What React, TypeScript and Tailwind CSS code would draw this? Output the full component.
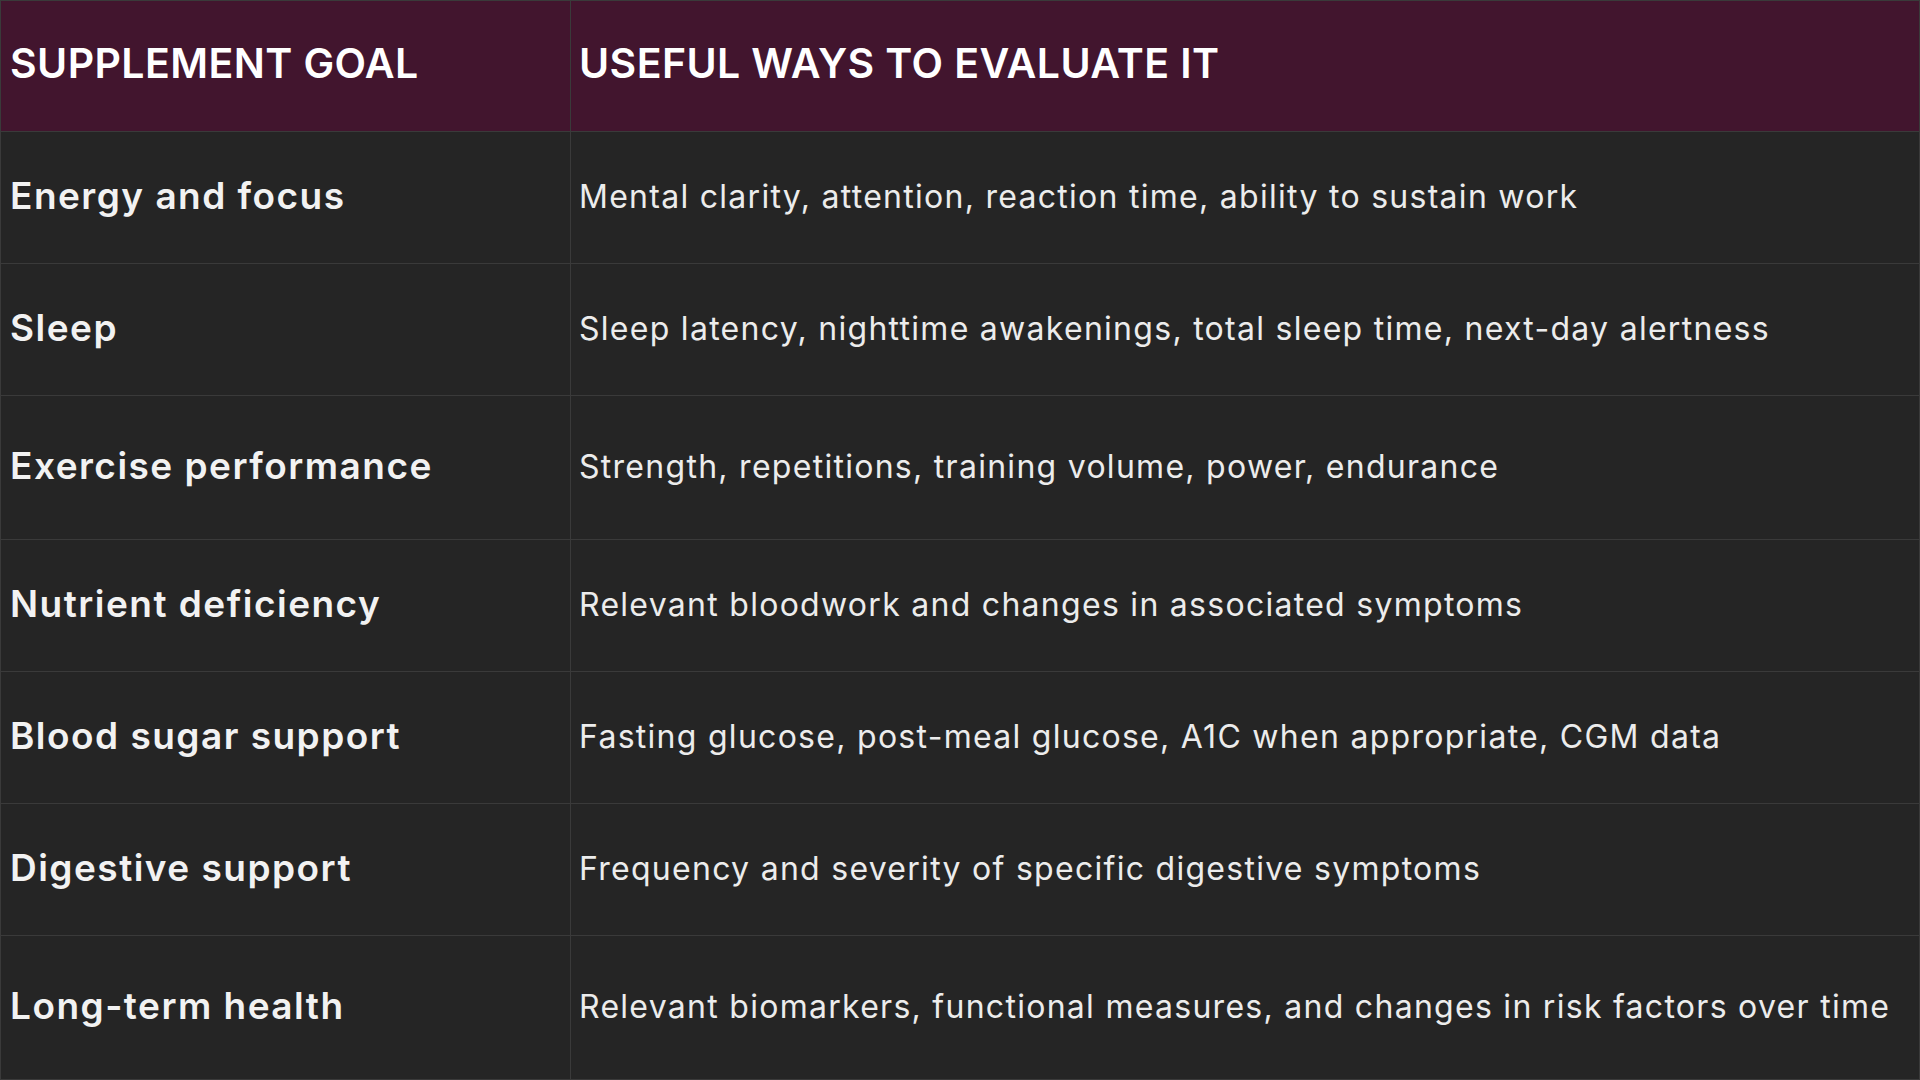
const rows: { goal: string; ways: string; tall?: boolean }[] = [
  { goal: 'Energy and focus', ways: 'Mental clarity, attention, reaction time, ability to sustain work' },
  { goal: 'Sleep', ways: 'Sleep latency, nighttime awakenings, total sleep time, next-day alertness' },
  { goal: 'Exercise performance', ways: 'Strength, repetitions, training volume, power, endurance', tall: true },
  { goal: 'Nutrient deficiency', ways: 'Relevant bloodwork and changes in associated symptoms' },
  { goal: 'Blood sugar support', ways: 'Fasting glucose, post-meal glucose, A1C when appropriate, CGM data' },
  { goal: 'Digestive support', ways: 'Frequency and severity of specific digestive symptoms' },
  { goal: 'Long-term health', ways: 'Relevant biomarkers, functional measures, and changes in risk factors over time', tall: true },
];

const App = () => {
  return (
    <div className="w-[1920px] h-[1080px] bg-[#252525] font-['Inter','Liberation_Sans',sans-serif] border border-[#3a3a3a] overflow-hidden">
      <div className="flex h-[131px] bg-[#42152e] border-b border-[#3a3a3a]">
        <div className="w-[570px] flex items-center pl-[9px] pb-[5px] border-r border-[#3a3a3a] text-[41px] tracking-[0.01em] font-semibold text-white uppercase">
          Supplement goal
        </div>
        <div className="flex-1 flex items-center pl-[8px] pb-[5px] text-[41px] tracking-[0.01em] font-semibold text-white uppercase">
          Useful ways to evaluate it
        </div>
      </div>
      {rows.map((r, i) => (
        <div
          key={r.goal}
          className={`flex ${r.tall ? 'h-[144px]' : 'h-[132px]'} ${i < rows.length - 1 ? 'border-b border-[#3a3a3a]' : ''}`}
        >
          <div className="w-[570px] flex items-center pl-[9px] pb-[4px] border-r border-[#3a3a3a] text-[37px] tracking-[0.04em] font-semibold text-[#f2f2f2]">
            {r.goal}
          </div>
          <div className="flex-1 flex items-center pl-[8px] pb-[2px] text-[32px] tracking-[0.04em] text-[#ececec]">
            {r.ways}
          </div>
        </div>
      ))}
    </div>
  );
};

export default App;
